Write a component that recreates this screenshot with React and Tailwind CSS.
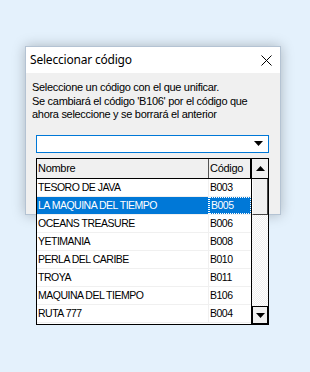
import React from "react";

const rows = [
  ["TESORO DE JAVA", "B003"],
  ["LA MAQUINA DEL TIEMPO", "B005"],
  ["OCEANS TREASURE", "B006"],
  ["YETIMANIA", "B008"],
  ["PERLA DEL CARIBE", "B010"],
  ["TROYA", "B011"],
  ["MAQUINA DEL TIEMPO", "B106"],
  ["RUTA 777", "B004"],
];

function Tri({ up }) {
  return (
    <svg width="9" height="5" viewBox="0 0 9 5">
      {up ? <polygon points="0,5 9,5 4.5,0" fill="#000" /> : <polygon points="0,0 9,0 4.5,5" fill="#000" />}
    </svg>
  );
}

export default function App() {
  return (
    <div className="w-[310px] h-[372px] bg-[#e4f1fc] pt-[46px] pl-[25px] overflow-hidden" style={{ fontFamily: '"Liberation Sans", Arial, sans-serif' }}>
      <div className="relative w-[256px] h-[169px] border border-[#b4c3d3] shadow-[0_0_12px_rgba(0,0,0,0.25)] flex flex-col">
        <div className="h-[26px] bg-white flex items-center justify-between pl-[4px] pr-[8px] text-[12px] text-black">
          <span className="tracking-[-0.2px]" style={{ fontFamily: '"Noto Sans", "Liberation Sans", sans-serif' }}>Seleccionar código</span>
          <svg width="11" height="11" viewBox="0 0 11 11">
            <path d="M0.5 0.5 L10.5 10.5 M10.5 0.5 L0.5 10.5" stroke="#000" strokeWidth="1" />
          </svg>
        </div>
        <div className="flex-1 bg-[#f0f0f0] pt-[8px] pl-[6px] text-[11px] leading-[13.5px] tracking-[-0.3px] text-black">
          <p>Seleccione un código con el que unificar.</p>
          <p>Se cambiará el código 'B106' por el código que</p>
          <p>ahora seleccione y se borrará el anterior</p>
          <div className="mt-[13px] ml-[4px] w-[233px] h-[18px] bg-white border border-[#0078d7] flex items-center justify-end pr-[5px]">
            <Tri />
          </div>
        </div>
        <div className="absolute left-[10px] top-[111px] w-[233px] h-[167px] bg-white border border-black flex text-[10.5px] tracking-[-0.5px] text-black">
          <div className="flex-1 flex flex-col">
            <div className="h-[20px] flex border-b border-black bg-[#f0f0f0] text-[11px] tracking-[-0.3px]">
              <div className="w-[172px] border-r border-[#555] flex items-center pl-[1px]">Nombre</div>
              <div className="flex-1 flex items-center pl-[1px] border-r border-black">Código</div>
            </div>
            {rows.map(([n, c], i) => {
              const sel = i === 1;
              return (
                <div key={c} className={"h-[18px] flex border-b border-[#f0f0f0] " + (sel ? "bg-[#0078d7] text-white" : "")}>
                  <div className={"w-[172px] flex items-center pl-[1px] " + (sel ? "border-r border-dotted border-white" : "border-r border-[#f0f0f0]")}>{n}</div>
                  <div className={"flex-1 flex items-center pl-[1px] " + (sel ? "border border-dotted border-white" : "")}>{c}</div>
                </div>
              );
            })}
          </div>
          <div className="w-[17px] flex flex-col border-l border-black bg-[#f7f7f7]">
            <div className="h-[20px] flex items-center justify-center border-b border-black bg-[#f0f0f0]">
              <Tri up />
            </div>
            <div className="h-[36px] bg-[#f0f0f0] border-b border-[#444] border-r border-r-[#444] border-l border-l-white"></div>
            <div className="flex-1 bg-[repeating-conic-gradient(#ffffff_0_25%,#eeeeee_0_50%)] bg-[length:2px_2px]"></div>
            <div className="h-[18px] flex items-center justify-center border border-black bg-[#f0f0f0]">
              <Tri />
            </div>
          </div>
        </div>
      </div>
    </div>
  );
}
